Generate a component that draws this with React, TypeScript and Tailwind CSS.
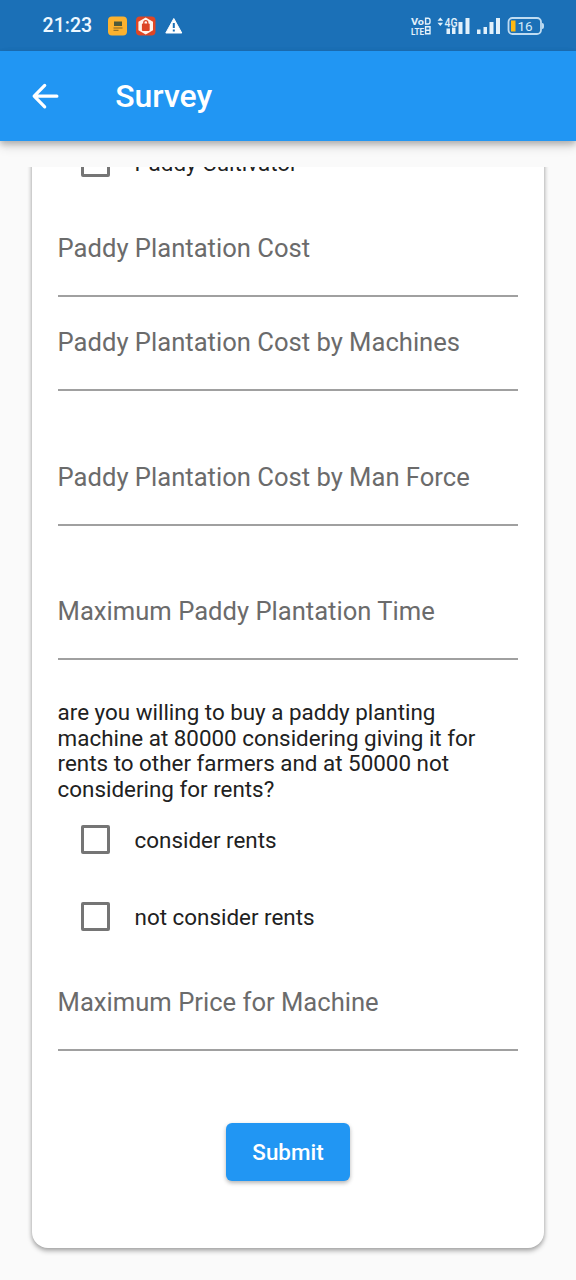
import React from "react";

function Field({ label, className = "" }: { label: string; className?: string }) {
  return (
    <div className={`flex h-[65px] flex-col justify-between border-b-2 border-[#a0a0a0] ${className}`}>
      <label className="block h-8 whitespace-nowrap text-[25.6px] leading-8 text-[#6b6b6b]">{label}</label>
    </div>
  );
}

function CheckRow({ label, className = "" }: { label: string; className?: string }) {
  return (
    <div className={`flex h-[77px] items-center pl-[23.6px] ${className}`}>
      <span className="h-[29px] w-[29px] shrink-0 rounded-[2px] border-[3px] border-[#757575]" />
      <span className="ml-[24.4px] whitespace-nowrap text-[22.4px] leading-[26px] text-[#212121]">{label}</span>
    </div>
  );
}

function StatusBar() {
  return (
    <div className="flex h-[51px] shrink-0 items-center bg-[#1b70b7] text-white">
      <span className="ml-[42.5px] w-[65.5px] text-[19.6px] font-medium leading-6 text-[#eef8ff]">21:23</span>
      <svg className="h-5 w-[76px]" viewBox="0 0 76 20">
        <rect x="0" y="0.5" width="19" height="19" rx="4" fill="#fcb22f" />
        <path d="M6 5.5h8v4.5H6z" fill="#4f5a3a" />
        <path d="M5.5 12h9M5.5 14.3h5" stroke="#806324" strokeWidth="1" />
        <rect x="28" y="0.5" width="19.5" height="19" rx="4" fill="#e04624" />
        <path d="M37.7 1.5l7.3 4.2v8.6l-7.3 4.200-7.300-4.200V5.700z" fill="#fff4ec" />
        <rect x="33.9" y="7.5" width="7.8" height="7.5" rx="1" fill="#dc4524" />
        <path d="M35.8 8.500V6.700a2 2 0 0 1 4 0v1.800" fill="none" stroke="#dc4524" strokeWidth="1.3" />
        <path d="M65.8 2.500l8 14.500h-16z" fill="#fff" stroke="#fff" strokeLinejoin="round" />
        <path d="M65.8 7v5M65.800 13.500v2" stroke="#1b70b7" strokeWidth="2" />
      </svg>
      <svg className="ml-auto mr-[30px] h-6 w-[136px] shrink-0" viewBox="0 0 136 24" fontFamily="Roboto, sans-serif" fill="#e2f1fb">
        <text x="1" y="10.5" fontSize="9.5" fontWeight="700" textLength="13" lengthAdjust="spacingAndGlyphs">Vo</text>
        <path d="M15.6 4.200h2.400q2 0 2 2v1.800q0 2-2 2h-2.400z" fill="none" stroke="#e2f1fb" strokeWidth="1.4" />
        <text x="1" y="20.5" fontSize="9.5" fontWeight="700" textLength="13" lengthAdjust="spacingAndGlyphs">LTE</text>
        <path d="M15.6 12.800H20v7h-4.400zM15.600 16.300H20" fill="none" stroke="#e2f1fb" strokeWidth="1.4" />
        <path d="M27.5 6.800l2.800-3.300 2.800 3.300zM27.500 8.800l2.800 3.300 2.800-3.300z" />
        <text x="34.5" y="12.5" fontSize="12" fontWeight="500" textLength="13" lengthAdjust="spacingAndGlyphs">4G</text>
        <path d="M36.5 14.500h3.500v5.500h-3.500zM42 13.500h3.500v6.500H42zM48.500 8h4v12h-4zM55.500 4h4v16h-4z" />
        <path d="M67 15.500h3.500v4.500H67zM73.500 13h3.500v7h-3.500zM79.500 8h4v12h-4zM86 4h4v16h-4z" />
        <rect x="98.5" y="4" width="32.5" height="16" rx="4" fill="none" stroke="#bfdcf2" strokeWidth="1.8" />
        <path d="M132 9c1.700 0 2 1 2 3s-.3 3-2 3z" fill="#bfdcf2" />
        <path d="M101 6.500h4.500v11H101z" fill="#fdb913" />
        <text x="107.500" y="16.800" fontSize="13.500" fill="#d5ecfb">16</text>
      </svg>
    </div>
  );
}

export default function App() {
  return (
    <div className="flex h-[1280px] w-[576px] flex-col overflow-hidden bg-[#fafafa] font-['Roboto',sans-serif]">
      <StatusBar />
      <header className="relative flex h-[90px] shrink-0 items-center bg-[#2196f3] text-white shadow-[0_3px_6px_rgba(0,0,0,0.22),0_6px_10px_rgba(0,0,0,0.12)]">
        <svg className="ml-[25.6px] h-[38.4px] w-[38.4px]" viewBox="0 0 24 24" fill="none" stroke="white" strokeWidth="2" strokeLinecap="round" strokeLinejoin="round">
          <path d="M19.3 12H5.300M11.700 5.300L5.100 12l6.600 6.700" />
        </svg>
        <h1 className="ml-[51.2px] text-[32px] font-medium leading-[38px]">Survey</h1>
      </header>
      <main className="mt-[26px] min-h-0 flex-1 overflow-hidden px-8">
        <form className="-mt-[43px] flex h-[1124px] flex-col rounded-2xl bg-white px-[25.6px] shadow-[0_3px_5px_rgba(0,0,0,0.3),0_0_4px_rgba(0,0,0,0.15)]">
          <CheckRow label="Paddy Cultivator" />
          <Field label="Paddy Plantation Cost" className="mt-[31px]" />
          <Field label="Paddy Plantation Cost by Machines" className="mt-[29px]" />
          <Field label="Paddy Plantation Cost by Man Force" className="mt-[70px]" />
          <Field label="Maximum Paddy Plantation Time" className="mt-[69px]" />
          <p className="mt-10 text-[22.4px] leading-[25.6px] text-[#212121]">
            are you willing to buy a paddy planting<br />
            machine at 80000 considering giving it for<br />
            rents to other farmers and at 50000 not<br />
            considering for rents?
          </p>
          <CheckRow label="consider rents" className="-mt-px" />
          <CheckRow label="not consider rents" />
          <Field label="Maximum Price for Machine" className="mt-[31px]" />
          <button type="button" className="mt-[72px] h-[58px] w-[124px] self-center rounded-[6px] bg-[#2196f3] text-[22.4px] font-medium leading-[26px] text-white shadow-[0_2px_4px_rgba(0,0,0,0.3)]">
            Submit
          </button>
        </form>
      </main>
    </div>
  );
}
